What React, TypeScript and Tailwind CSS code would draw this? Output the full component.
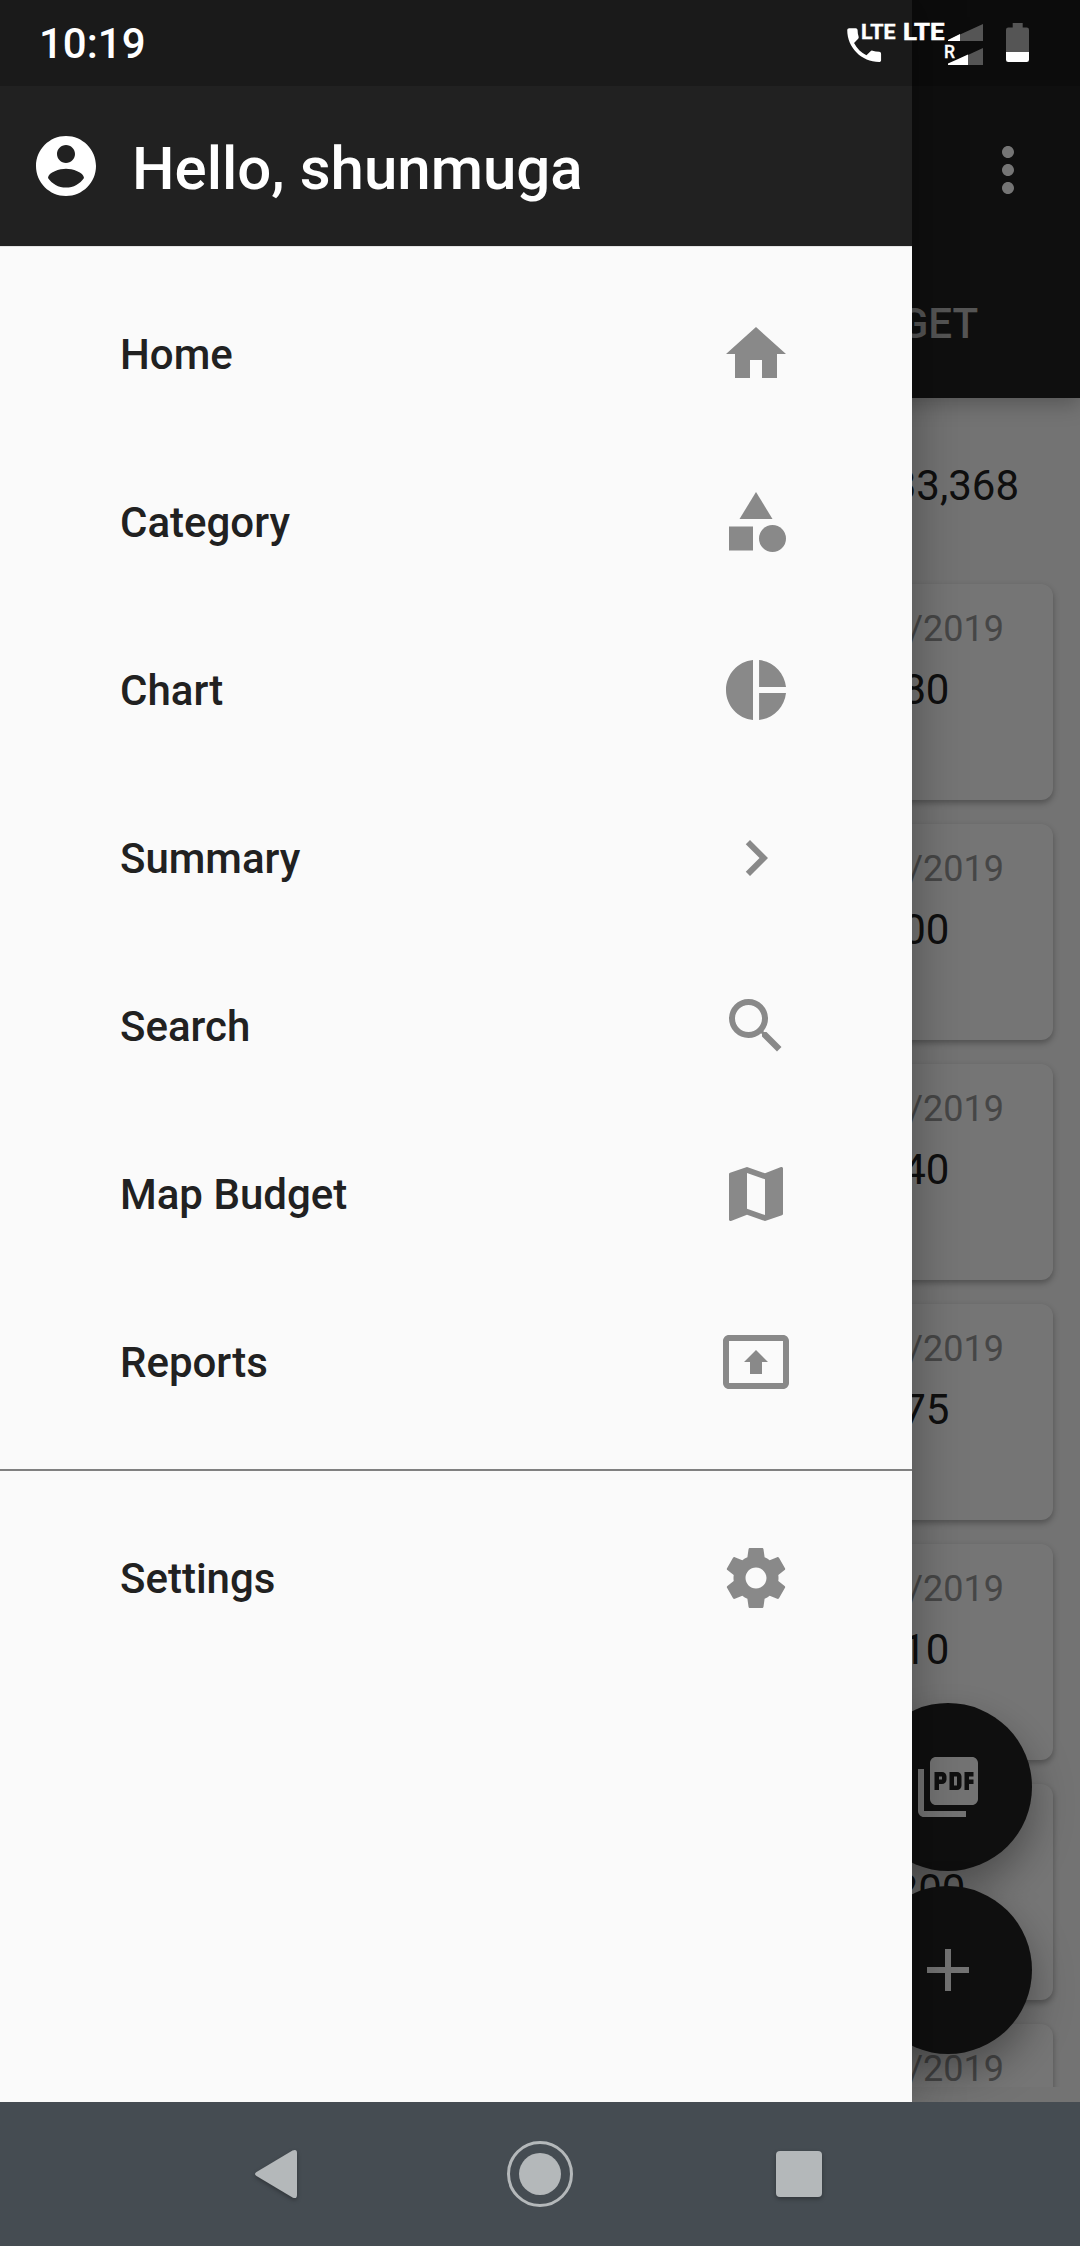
import type { ReactNode } from 'react';
import {
  MdAdd,
  MdCategory,
  MdChevronRight,
  MdHome,
  MdMap,
  MdMoreVert,
  MdPictureAsPdf,
  MdPieChart,
  MdPresentToAll,
  MdSearch,
} from 'react-icons/md';

const SettingsIcon = () => (
  <svg viewBox="0 0 24 24" width="72" height="72" fill="currentColor">
    <path d="M19.43 12.98c.04-.32.07-.64.07-.98s-.03-.66-.07-.98l2.11-1.65c.19-.15.24-.42.12-.64l-2-3.46c-.12-.22-.39-.3-.61-.22l-2.49 1c-.52-.4-1.08-.73-1.69-.98l-.38-2.65C14.46 2.18 14.25 2 14 2h-4c-.25 0-.46.18-.49.42l-.38 2.65c-.61.25-1.17.59-1.69.98l-2.49-1c-.23-.09-.49 0-.61.22l-2 3.46c-.13.22-.07.49.12.64l2.11 1.65c-.04.32-.07.65-.07.98s.03.66.07.98l-2.11 1.65c-.19.15-.24.42-.12.64l2 3.46c.12.22.39.3.61.22l2.49-1c.52.4 1.08.73 1.69.98l.38 2.65c.03.24.24.42.49.42h4c.25 0 .46-.18.49-.42l.38-2.65c.61-.25 1.17-.59 1.69-.98l2.49 1c.23.09.49 0 .61-.22l2-3.46c.12-.22.07-.49-.12-.64l-2.11-1.65zM12 15.5c-1.93 0-3.5-1.57-3.5-3.5s1.57-3.5 3.5-3.5 3.5 1.57 3.5 3.5-1.57 3.5-3.5 3.5z" />
  </svg>
);

const AccountIcon = () => (
  <svg viewBox="0 0 24 24" width="72" height="72" fill="currentColor">
    <path d="M12 2C6.48 2 2 6.48 2 12s4.48 10 10 10 10-4.48 10-10S17.52 2 12 2zm0 3c1.66 0 3 1.34 3 3s-1.34 3-3 3-3-1.34-3-3 1.34-3 3-3zm0 14.2c-2.5 0-4.71-1.28-6-3.22.03-1.99 4-3.08 6-3.08 1.99 0 5.97 1.09 6 3.08-1.29 1.94-3.5 3.22-6 3.22z" />
  </svg>
);

const menu: { label: string; icon: ReactNode }[] = [
  { label: 'Home', icon: <MdHome size={72} /> },
  { label: 'Category', icon: <MdCategory size={72} /> },
  { label: 'Chart', icon: <MdPieChart size={72} /> },
  { label: 'Summary', icon: <MdChevronRight size={72} /> },
  { label: 'Search', icon: <MdSearch size={72} /> },
  { label: 'Map Budget', icon: <MdMap size={72} /> },
  { label: 'Reports', icon: <MdPresentToAll size={72} /> },
];

const entries = ['380', '300', '340', '375', '310', '1,200', '150'];

function MenuItem({ label, icon }: { label: string; icon: ReactNode }) {
  return (
    <div className="flex h-[168px] items-center justify-between px-[120px]">
      <span className="pt-[2px] text-[42px] font-medium leading-[50px] text-[#212121]">{label}</span>
      <span className="text-[#898989]">{icon}</span>
    </div>
  );
}

function StatusBar() {
  return (
    <div className="absolute inset-x-0 top-0 flex h-[86px] items-center justify-between bg-black/20 pl-[39px] text-white">
      <span className="pt-[2px] text-[42px] font-medium leading-[50px]">10:19</span>
      <svg width="240" height="86" viewBox="840 0 240 86" fill="#fff" fontFamily="Roboto" fontWeight="700">
        <path
          transform="translate(841.6 22.6) scale(1.88)"
          d="M6.62 10.79c1.44 2.83 3.76 5.14 6.59 6.59l2.2-2.2c.27-.27.67-.36 1.02-.24 1.12.37 2.33.57 3.57.57.55 0 1 .45 1 1V20c0 .55-.45 1-1 1-9.39 0-17-7.61-17-17 0-.55.45-1 1-1h3.5c.55 0 1 .45 1 1 0 1.25.2 2.45.57 3.57.11.35.03.74-.25 1.02l-2.2 2.2z"
        />
        <text x="861" y="39.3" fontSize="20" textLength="34.5" lengthAdjust="spacingAndGlyphs" stroke="#fff" strokeWidth="0.4">
          LTE
        </text>
        <text x="903" y="39.5" fontSize="24.5" textLength="41.5" lengthAdjust="spacingAndGlyphs" stroke="#fff" strokeWidth="0.6">
          LTE
        </text>
        <path d="M948 41V40L983 24V41Z" fill="#555" />
        <path d="M948 41V40L960 34V41Z" />
        <path d="M957 60L983 48V65H957Z" fill="#555" />
        <path d="M948 65V63.5L957 59.5L968 54.5V65Z" />
        <text x="944" y="57.8" fontSize="17.5" fontWeight="500" stroke="#fff" strokeWidth="0.3">
          R
        </text>
        <path d="M1012.700 23h10v4.500h4a2.300 2.300 0 0 1 2.300 2.300V52h-23V29.800a2.300 2.300 0 0 1 2.300-2.300h4.400z" fill="#555" />
        <path d="M1006 52h23v7.700a2.300 2.300 0 0 1-2.300 2.300h-18.400a2.300 2.300 0 0 1-2.300-2.300z" />
      </svg>
    </div>
  );
}

function EntryCard({ amount }: { amount: string }) {
  return (
    <div className="h-[216px] shrink-0 rounded-[12px] bg-white pt-[24px] shadow-[0_3px_6px_rgba(0,0,0,0.3)]">
      <div className="pr-[49px] text-right text-[36px] leading-[42px] text-[#999]">10/10/2019</div>
      <div className="mt-[15px] ml-auto w-[278px] text-center text-[42px] leading-[50px] text-[#212121]">{amount}</div>
    </div>
  );
}

function BudgetPage() {
  return (
    <div className="flex h-[2102px] flex-col bg-[#fafafa]">
      <header className="relative h-[398px] bg-[#212121] pt-[86px] text-white shadow-[0_6px_20px_rgba(0,0,0,0.25)]">
        <div className="flex h-[168px] items-center justify-end pr-[36px]">
          <MdMoreVert size={72} />
        </div>
        <div className="flex h-[138px] items-center justify-end pr-[102px] text-[42px] font-medium text-white/70">
          BUDGET
        </div>
      </header>
      <div className="flex h-[174px] shrink-0 items-center justify-end pr-[61px] text-[42px] text-[#212121]">33,368</div>
      <div className="flex min-h-0 flex-1 flex-col gap-[24px] overflow-hidden px-[27px] pt-[12px]">
        {entries.map((amount, i) => (
          <EntryCard key={i} amount={amount} />
        ))}
      </div>
      <div className="h-[15px] shrink-0" />
      <div className="absolute right-[48px] bottom-[192px] flex flex-col gap-[15px] text-[#fafafa]">
        <div className="flex size-[168px] items-center justify-center rounded-full bg-[#212121] shadow-[0_18px_40px_rgba(0,0,0,0.35)]">
          <MdPictureAsPdf size={72} />
        </div>
        <div className="flex size-[168px] items-center justify-center rounded-full bg-[#212121] shadow-[0_18px_40px_rgba(0,0,0,0.35)]">
          <MdAdd size={72} />
        </div>
      </div>
    </div>
  );
}

function Drawer() {
  return (
    <aside className="absolute top-0 left-0 h-[2102px] w-[912px] bg-[#fafafa] shadow-[0_0_48px_rgba(0,0,0,0.34)]">
      <div className="flex h-[246px] items-center bg-[#212121] pt-[86px] pl-[30px] text-white">
        <AccountIcon />
        <span className="mt-[6px] ml-[30px] text-[60px] font-medium leading-[70px]">Hello, shunmuga</span>
      </div>
      <nav className="border-t border-[#e4e4e4] pt-[23px]">
        {menu.map((item) => (
          <MenuItem key={item.label} label={item.label} icon={item.icon} />
        ))}
        <div className="my-[23px] h-[2px] bg-[#808080]" />
        <MenuItem label="Settings" icon={<SettingsIcon />} />
      </nav>
    </aside>
  );
}

function NavigationBar() {
  return (
    <div className="relative flex h-[144px] items-center justify-center gap-[187px] bg-[#454c52] text-[#b4b8ba]">
      <svg width="72" height="72" viewBox="0 0 72 72" fill="currentColor" className="drop-shadow-[0_2px_2px_rgba(0,0,0,0.3)]">
        <path d="M11.500 34L47.500 12.500Q52 10.500 52 15V57Q52 61.500 47.500 59.500L11.500 38Q8.500 36 11.500 34Z" />
      </svg>
      <svg width="72" height="72" viewBox="0 0 72 72" fill="currentColor">
        <circle cx="36" cy="36" r="31.500" fill="none" stroke="currentColor" strokeWidth="3" />
        <circle cx="36" cy="36" r="21" />
      </svg>
      <svg width="72" height="72" viewBox="0 0 72 72" fill="currentColor" className="drop-shadow-[0_2px_2px_rgba(0,0,0,0.3)]">
        <rect x="13" y="13" width="46" height="46" rx="4" />
      </svg>
    </div>
  );
}

export default function App() {
  return (
    <div className="relative h-[2246px] w-[1080px] overflow-hidden font-['Roboto',sans-serif]">
      <BudgetPage />
      <div className="absolute inset-x-0 top-0 h-[2102px] bg-black/54" />
      <Drawer />
      <StatusBar />
      <NavigationBar />
    </div>
  );
}
